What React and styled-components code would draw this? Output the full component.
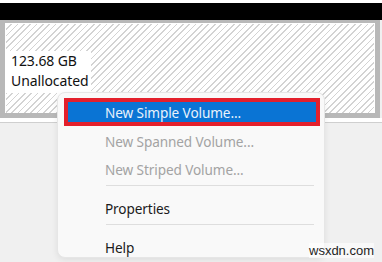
import React from "react";
import styled, { createGlobalStyle } from "styled-components";

const Global = createGlobalStyle`
  html, body { margin: 0; padding: 0; }
  body {
    width: 382px;
    height: 262px;
    overflow: hidden;
    background: #f0f0f0;
    font-family: "Noto Sans", "Open Sans", sans-serif;
  }
`;

const Page = styled.div`
  position: relative;
  width: 382px;
  height: 262px;
  display: flex;
  flex-direction: column;
  background: #f0f0f0;
`;

const TopGap = styled.div`
  height: 3px;
  background: #ffffff;
`;

const BlackBar = styled.div`
  height: 17px;
  background: #000000;
`;

const DiskBlock = styled.div`
  box-sizing: border-box;
  height: 98px;
  margin-right: 2px;
  border: 5px solid #b8b8b8;
  border-top-width: 3px;
  padding: 1px 1px 0 1px;
  background: #ffffff;
  display: flex;
`;

const Hatch = styled.div`
  flex: 1;
  box-sizing: border-box;
  padding: 25px 0 0 0;
  background: repeating-linear-gradient(
    135deg,
    #ffffff 0px,
    #ffffff 3.3px,
    #d3d3d3 3.3px,
    #d3d3d3 4.5px
  );
`;

const Label = styled.div`
  display: inline-flex;
  flex-direction: column;
  background: #ffffff;
  padding: 0 3px 2px 5px;
  font-size: 14px;
  line-height: 20px;
  color: #111111;
  letter-spacing: -0.1px;
`;

const BottomStrip = styled.div`
  height: 4px;
  background: #ffffff;
  border-bottom: 1px solid #cfcfcf;
`;

const Rest = styled.div`
  flex: 1;
  background: #f0f0f0;
`;

const Menu = styled.div`
  position: absolute;
  left: 57px;
  top: 92px;
  width: 268px;
  height: 166px;
  box-sizing: border-box;
  padding-top: 5px;
  background: #f9f9f9;
  border: 1px solid #e6e6e6;
  border-radius: 8px;
  box-shadow: 0 2px 6px rgba(0, 0, 0, 0.08);
  overflow: hidden;
  display: flex;
  flex-direction: column;
`;

const Item = styled.div`
  flex-shrink: 0;
  box-sizing: border-box;
  height: 28px;
  display: flex;
  align-items: center;
  padding-left: ${(p) => (p.$active ? "37px" : "47px")};
  margin: ${(p) => (p.$active ? "0 4px 1px 6px" : "0")};
  font-size: 13.6px;
  letter-spacing: -0.1px;
  color: ${(p) => (p.$disabled ? "#a3a3a3" : p.$active ? "#e9f2fb" : "#1b1b1b")};
  background: ${(p) => (p.$active ? "#0a74d4" : "transparent")};
  border: ${(p) => (p.$active ? "4px solid #e3202c" : "none")};
`;

const Separator = styled.div`
  flex-shrink: 0;
  height: 1px;
  margin: 2px 10px 8px 48px;
  background: #dedede;
`;

const Watermark = styled.div`
  position: absolute;
  left: 309px;
  top: 243px;
  font-family: "Liberation Sans", Arial, sans-serif;
  font-size: 13px;
  color: #1e1e1e;
  background: rgba(255, 255, 255, 0.6);
`;

export default function App() {
  return (
    <>
      <Global />
      <Page>
        <TopGap />
        <BlackBar />
        <DiskBlock>
          <Hatch>
            <Label>
              <span>123.68 GB</span>
              <span>Unallocated</span>
            </Label>
          </Hatch>
        </DiskBlock>
        <BottomStrip />
        <Rest />
        <Menu>
          <Item $active>New Simple Volume...</Item>
          <Item $disabled>New Spanned Volume...</Item>
          <Item $disabled>New Striped Volume...</Item>
          <Separator />
          <Item>Properties</Item>
          <Separator />
          <Item>Help</Item>
        </Menu>
        <Watermark>wsxdn.com</Watermark>
      </Page>
    </>
  );
}
